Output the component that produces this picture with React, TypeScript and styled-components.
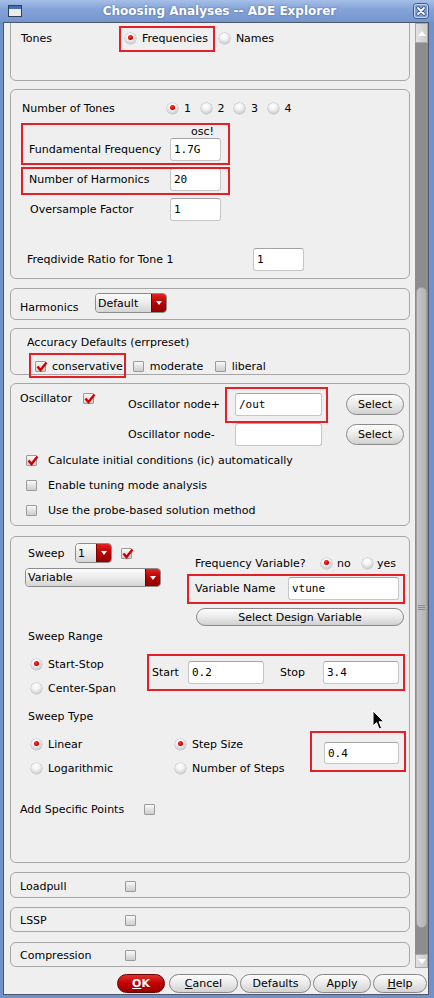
import React from "react";
import styled, { createGlobalStyle } from "styled-components";

const GlobalStyle = createGlobalStyle`
  * { box-sizing: border-box; }
  html, body { margin: 0; padding: 0; }
  body {
    background: #7090c8;
    font-family: "DejaVu Sans", "Liberation Sans", sans-serif;
    font-size: 11px;
    color: #000;
  }
`;

const Window = styled.div`
  position: relative;
  width: 434px;
  height: 998px;
  display: flex;
  flex-direction: column;
  background: #7191c9;
  overflow: hidden;
`;

const TitleBar = styled.header`
  flex: none;
  height: 22px;
  display: flex;
  align-items: center;
  padding: 0 5px 0 8px;
  background: linear-gradient(#a6bfe8 0%, #86a4d9 40%, #7595cd 100%);
`;

const TitleText = styled.div`
  flex: 1;
  text-align: center;
  padding-left: 4px;
  font-family: "DejaVu Sans", sans-serif;
  font-weight: bold;
  font-size: 12px;
  line-height: 22px;
  color: #fff;
  white-space: nowrap;
  text-shadow: 0 0 2px rgba(40, 60, 110, 0.6);
`;

const Frame = styled.div`
  flex: 1;
  min-height: 0;
  display: flex;
  flex-direction: column;
  margin: 0 5px 3px 3px;
  border: 1px solid #4b566c;
  background: #efefef;
`;

const Main = styled.div`
  flex: none;
  height: 945px;
  display: flex;
`;

const Viewport = styled.div`
  flex: 1;
  overflow: hidden;
  display: flex;
  flex-direction: column;
  padding: 0 5px 0 6px;
`;

const Scrollbar = styled.div`
  flex: none;
  width: 13px;
  display: flex;
  flex-direction: column;
  background: #8d8d8d;
`;

const ScrollArrow = styled.div<{ $h: number }>`
  flex: none;
  height: ${(p) => p.$h}px;
  display: flex;
  align-items: center;
  justify-content: center;
  background: linear-gradient(90deg, #e2e2e2, #cdcdcd);
  border: 1px solid #a9a9a9;
`;

const TriUp = styled.span`
  width: 0;
  height: 0;
  border-left: 4px solid transparent;
  border-right: 4px solid transparent;
  border-bottom: 5px solid #fff;
`;

const TriDown = styled.span`
  width: 0;
  height: 0;
  border-left: 4px solid transparent;
  border-right: 4px solid transparent;
  border-top: 5px solid #fff;
`;

const ScrollTrack = styled.div`
  flex: 1;
  padding: 244px 1px 0;
`;

const Thumb = styled.div`
  height: 641px;
  border-radius: 6px;
  border: 1px solid #a0a0a0;
  background: linear-gradient(90deg, #c6c6c6, #b3b3b3);
  display: flex;
  flex-direction: column;
  align-items: center;
  justify-content: center;
  gap: 1px;
`;

const Grip = styled.span`
  width: 7px;
  height: 1px;
  background: #8a8a8a;
`;

const ButtonBar = styled.footer`
  flex: none;
  height: 26px;
  display: flex;
  justify-content: flex-end;
  align-items: flex-start;
  gap: 2px;
  padding: 6px 1px 0 0;
`;

const DialogButton = styled.div<{ $w: number; $primary?: boolean; $mr?: number }>`
  flex: none;
  width: ${(p) => p.$w}px;
  height: 19px;
  margin-right: ${(p) => p.$mr ?? 0}px;
  border-radius: 10px;
  border: 1px solid ${(p) => (p.$primary ? "#6a0000" : "#878787")};
  background: ${(p) =>
    p.$primary
      ? "linear-gradient(#e43030, #c00000 50%, #980000)"
      : "linear-gradient(#fcfcfc, #ececec 45%, #d2d2d2)"};
  color: ${(p) => (p.$primary ? "#fff" : "#000")};
  font-weight: ${(p) => (p.$primary ? "bold" : "normal")};
  display: flex;
  align-items: center;
  justify-content: center;
  line-height: 13px;
  white-space: nowrap;
`;

const Mnemonic = styled.span`
  text-decoration: underline;
`;

const Group = styled.section<{ $h: number; $mt: number }>`
  flex: none;
  position: relative;
  display: flex;
  flex-direction: column;
  height: ${(p) => p.$h}px;
  margin-top: ${(p) => p.$mt}px;
  border: 1px solid #a7a7a7;
  border-radius: 6px;
`;

const Row = styled.div<{ $mt?: number; $pl?: number; $h?: number; $align?: string }>`
  flex: none;
  display: flex;
  align-items: ${(p) => p.$align ?? "center"};
  margin-top: ${(p) => p.$mt ?? 0}px;
  padding-left: ${(p) => p.$pl ?? 0}px;
  ${(p) => (p.$h ? `height: ${p.$h}px;` : "")}
`;

const FillRow = styled.div`
  flex: 1;
  display: flex;
  align-items: center;
  padding: 2px 0 0 9px;
`;

const Column = styled.div<{ $w?: number; $mt?: number; $ml?: number; $gap?: number; $pl?: number }>`
  flex: none;
  display: flex;
  flex-direction: column;
  ${(p) => (p.$w ? `width: ${p.$w}px;` : "")}
  margin-top: ${(p) => p.$mt ?? 0}px;
  margin-left: ${(p) => p.$ml ?? 0}px;
  padding-left: ${(p) => p.$pl ?? 0}px;
  gap: ${(p) => p.$gap ?? 0}px;
`;

const Label = styled.span<{ $w?: number; $lh?: number; $mt?: number; $ml?: number }>`
  flex: none;
  white-space: nowrap;
  line-height: ${(p) => p.$lh ?? 13}px;
  ${(p) => (p.$w ? `width: ${p.$w}px;` : "")}
  margin-top: ${(p) => p.$mt ?? 0}px;
  margin-left: ${(p) => p.$ml ?? 0}px;
`;

const Choice = styled.span<{ $w?: number; $gap?: number; $ml?: number; $h?: number }>`
  flex: none;
  display: flex;
  align-items: center;
  gap: ${(p) => p.$gap ?? 6}px;
  ${(p) => (p.$w ? `width: ${p.$w}px;` : "")}
  ${(p) => (p.$h ? `height: ${p.$h}px;` : "")}
  margin-left: ${(p) => p.$ml ?? 0}px;
`;

const Radio = styled.span<{ $on?: boolean }>`
  flex: none;
  position: relative;
  width: 11px;
  height: 11px;
  border-radius: 50%;
  background: radial-gradient(circle at 45% 30%, #ffffff 0%, #f3f3f3 35%, #d0d0d0 72%, #a9a9a9 100%);
  box-shadow: 0 0 0 0.5px #b4b4b4;
  &::after {
    content: "";
    display: ${(p) => (p.$on ? "block" : "none")};
    position: absolute;
    left: 3px;
    top: 2.5px;
    width: 5px;
    height: 5px;
    border-radius: 50%;
    background: radial-gradient(circle at 40% 35%, #ff4040 0%, #d30000 55%, #8c0000 100%);
  }
`;

const CheckBox = styled.span`
  flex: none;
  position: relative;
  width: 11px;
  height: 11px;
  border: 1px solid #9b9b9b;
  border-radius: 1px;
  background: linear-gradient(#fafafa, #e2e2e2 50%, #cdcdcd);
`;

const CheckMark = styled.svg`
  position: absolute;
  left: -1px;
  top: -2px;
  overflow: visible;
`;

const Field = styled.div<{ $w: number; $h?: number }>`
  flex: none;
  width: ${(p) => p.$w}px;
  height: ${(p) => p.$h ?? 23}px;
  display: flex;
  align-items: center;
  padding-left: 3px;
  background: #fff;
  border: 1px solid #c6c6c6;
  border-top-color: #a4a4a4;
  border-radius: 3px;
  font-family: "DejaVu Sans Mono", "Liberation Mono", monospace;
  font-size: 11px;
  white-space: nowrap;
`;

const FieldStack = styled.div`
  flex: none;
  display: flex;
  flex-direction: column;
  align-items: flex-end;
`;

const OscTag = styled.span`
  height: 13px;
  line-height: 13px;
  padding-right: 7px;
`;

const PillButton = styled.div<{ $w: number; $h: number; $ml?: number }>`
  flex: none;
  width: ${(p) => p.$w}px;
  height: ${(p) => p.$h}px;
  margin-left: ${(p) => p.$ml ?? 0}px;
  border-radius: 11px;
  border: 1px solid #8a8a8a;
  background: linear-gradient(#fcfcfc, #ededed 45%, #d0d0d0);
  display: flex;
  align-items: center;
  justify-content: center;
  line-height: 13px;
  white-space: nowrap;
`;

const ComboBox = styled.div<{ $w: number; $h: number }>`
  flex: none;
  display: flex;
  width: ${(p) => p.$w}px;
  height: ${(p) => p.$h}px;
  border: 1px solid #8c8c8c;
  border-radius: 4px;
  overflow: hidden;
`;

const ComboValue = styled.div`
  flex: 1;
  display: flex;
  align-items: center;
  padding-left: 2px;
  background: linear-gradient(#fcfcfc, #ebebeb 50%, #d4d4d4);
  white-space: nowrap;
`;

const ComboButton = styled.div`
  flex: none;
  width: 15px;
  display: flex;
  align-items: center;
  justify-content: center;
  border-left: 1px solid #760000;
  background: linear-gradient(#de2424, #b80000 50%, #8e0000);
`;

const ComboTri = styled.span`
  width: 0;
  height: 0;
  border-left: 3.5px solid transparent;
  border-right: 3.5px solid transparent;
  border-top: 4px solid #fff;
`;

const Marked = styled.div<{ $align?: string; $mt?: number }>`
  position: relative;
  flex: none;
  display: flex;
  align-items: ${(p) => p.$align ?? "center"};
  margin-top: ${(p) => p.$mt ?? 0}px;
`;

const RedFrame = styled.span<{ $t: number; $r: number; $b: number; $l: number }>`
  position: absolute;
  top: ${(p) => -p.$t}px;
  right: ${(p) => -p.$r}px;
  bottom: ${(p) => -p.$b}px;
  left: ${(p) => -p.$l}px;
  border: 2px solid #e61e25;
  pointer-events: none;
`;

const Cursor = styled.svg`
  position: absolute;
  left: 361px;
  top: 173px;
`;

function Check({ on }: { on?: boolean }) {
  return (
    <CheckBox>
      {on && (
        <CheckMark width="13" height="13" viewBox="0 0 13 13">
          <polyline points="2.5,6.5 5.5,10 11.5,2.5" fill="none" stroke="#d10000" strokeWidth="2.4" />
        </CheckMark>
      )}
    </CheckBox>
  );
}

function Combo({ w, h, text }: { w: number; h: number; text: string }) {
  return (
    <ComboBox $w={w} $h={h}>
      <ComboValue>{text}</ComboValue>
      <ComboButton>
        <ComboTri />
      </ComboButton>
    </ComboBox>
  );
}

function WindowIcon() {
  return (
    <svg width="14" height="12" viewBox="0 0 14 12">
      <rect x="0.5" y="0.5" width="13" height="11" fill="#ececec" stroke="#2f3f60" />
      <rect x="1" y="1" width="12" height="3" fill="#4a6db0" />
    </svg>
  );
}

function CloseIcon() {
  return (
    <svg width="16" height="16" viewBox="0 0 16 16">
      <rect x="0.5" y="0.5" width="15" height="15" rx="3" fill="#7e9dd3" stroke="#3c5890" />
      <rect x="1.5" y="1.5" width="13" height="13" rx="2" fill="none" stroke="#cad8ef" />
      <path d="M5 5 L11 11 M11 5 L5 11" stroke="#34507e" strokeWidth="3.4" strokeLinecap="round" />
      <path d="M5 5 L11 11 M11 5 L5 11" stroke="#ffffff" strokeWidth="1.8" strokeLinecap="round" />
    </svg>
  );
}

export default function App() {
  return (
    <>
      <GlobalStyle />
      <Window>
        <TitleBar>
          <WindowIcon />
          <TitleText>Choosing Analyses -- ADE Explorer</TitleText>
          <CloseIcon />
        </TitleBar>
        <Frame>
          <Main>
            <Viewport>
              {/* Tones */}
              <Group $h={76} $mt={-18}>
                <Row $mt={19} $pl={10} $h={26}>
                  <Label $w={104}>Tones</Label>
                  <Marked>
                    <Choice>
                      <Radio $on />
                      <Label>Frequencies</Label>
                    </Choice>
                    <RedFrame $t={6} $l={6} $r={7} $b={7} />
                  </Marked>
                  <Choice $ml={11}>
                    <Radio />
                    <Label>Names</Label>
                  </Choice>
                </Row>
              </Group>

              {/* Tone settings */}
              <Group $h={190} $mt={8}>
                <Row $mt={9} $pl={11} $h={18}>
                  <Label $w={145}>Number of Tones</Label>
                  {["1", "2", "3", "4"].map((n) => (
                    <Choice key={n} $w={33.5}>
                      <Radio $on={n === "1"} />
                      <Label>{n}</Label>
                    </Choice>
                  ))}
                </Row>
                <Row $mt={8} $pl={18}>
                  <Marked $align="flex-end">
                    <Label $w={141} $lh={23}>
                      Fundamental Frequency
                    </Label>
                    <FieldStack>
                      <OscTag>osc!</OscTag>
                      <Field $w={51}>1.7G</Field>
                    </FieldStack>
                    <RedFrame $t={2} $l={8} $r={9} $b={4} />
                  </Marked>
                </Row>
                <Row $mt={7} $pl={18}>
                  <Marked>
                    <Label $w={141} $lh={23}>
                      Number of Harmonics
                    </Label>
                    <Field $w={51}>20</Field>
                    <RedFrame $t={1} $l={8} $r={9} $b={4} />
                  </Marked>
                </Row>
                <Row $mt={7} $pl={19}>
                  <Label $w={140}>Oversample Factor</Label>
                  <Field $w={51}>1</Field>
                </Row>
                <Row $mt={27} $pl={16}>
                  <Label $w={226}>Freqdivide Ratio for Tone 1</Label>
                  <Field $w={51}>1</Field>
                </Row>
              </Group>

              {/* Harmonics */}
              <Group $h={32} $mt={9}>
                <Row $mt={4} $pl={9} $align="flex-start">
                  <Label $w={75} $mt={8}>
                    Harmonics
                  </Label>
                  <Combo w={72} h={20} text="Default" />
                </Row>
              </Group>

              {/* Accuracy */}
              <Group $h={47} $mt={8}>
                <Row $mt={7} $pl={16}>
                  <Label>Accuracy Defaults (errpreset)</Label>
                </Row>
                <Row $mt={11} $pl={24} $h={13}>
                  <Marked>
                    <Choice>
                      <Check on />
                      <Label>conservative</Label>
                    </Choice>
                    <RedFrame $t={7} $l={6} $r={3} $b={5} />
                  </Marked>
                  <Choice $ml={10} $w={82}>
                    <Check />
                    <Label>moderate</Label>
                  </Choice>
                  <Choice>
                    <Check />
                    <Label>liberal</Label>
                  </Choice>
                </Row>
              </Group>

              {/* Oscillator */}
              <Group $h={143} $mt={8}>
                <Row $pl={9} $align="flex-start">
                  <Column $w={108} $mt={8}>
                    <Choice $gap={0}>
                      <Label $w={63}>Oscillator</Label>
                      <Check on />
                    </Choice>
                  </Column>
                  <Column $mt={9} $gap={7}>
                    <Row>
                      <Label $w={107}>Oscillator node+</Label>
                      <Marked>
                        <Field $w={87}>/out</Field>
                        <RedFrame $t={6} $l={10} $r={6} $b={7} />
                      </Marked>
                      <PillButton $w={58} $h={21} $ml={24}>
                        Select
                      </PillButton>
                    </Row>
                    <Row>
                      <Label $w={107}>Oscillator node-</Label>
                      <Field $w={87} />
                      <PillButton $w={58} $h={21} $ml={24}>
                        Select
                      </PillButton>
                    </Row>
                  </Column>
                </Row>
                <Column $mt={8} $pl={15} $gap={12}>
                  <Choice $gap={11}>
                    <Check on />
                    <Label>Calculate initial conditions (ic) automatically</Label>
                  </Choice>
                  <Choice $gap={11}>
                    <Check />
                    <Label>Enable tuning mode analysis</Label>
                  </Choice>
                  <Choice $gap={11}>
                    <Check />
                    <Label>Use the probe-based solution method</Label>
                  </Choice>
                </Column>
              </Group>

              {/* Sweep */}
              <Group $h={327} $mt={10}>
                <Row $mt={6} $pl={14} $align="flex-start">
                  <Column $w={136}>
                    <Row $pl={3} $h={20}>
                      <Label $w={47}>Sweep</Label>
                      <Combo w={37} h={20} text="1" />
                      <Choice $ml={9}>
                        <Check on />
                      </Choice>
                    </Row>
                    <Row $mt={5}>
                      <Combo w={136} h={19} text="Variable" />
                    </Row>
                  </Column>
                  <Column $w={217} $ml={26} $mt={10}>
                    <Row $pl={8} $h={20}>
                      <Label $w={126}>Frequency Variable?</Label>
                      <Choice $w={41} $gap={5}>
                        <Radio $on />
                        <Label>no</Label>
                      </Choice>
                      <Choice $gap={4}>
                        <Radio />
                        <Label>yes</Label>
                      </Choice>
                    </Row>
                    <Row $mt={4} $pl={8}>
                      <Marked>
                        <Label $w={93} $lh={23}>
                          Variable Name
                        </Label>
                        <Field $w={111}>vtune</Field>
                        <RedFrame $t={3} $l={8} $r={6} $b={4} />
                      </Marked>
                    </Row>
                    <Row $mt={8} $pl={9}>
                      <PillButton $w={208} $h={18}>
                        Select Design Variable
                      </PillButton>
                    </Row>
                  </Column>
                </Row>

                <Row $mt={4} $pl={17}>
                  <Label>Sweep Range</Label>
                </Row>
                <Row $mt={11} $pl={20} $align="flex-start">
                  <Column $w={121} $gap={4}>
                    <Choice $h={20}>
                      <Radio $on />
                      <Label>Start-Stop</Label>
                    </Choice>
                    <Choice $h={20}>
                      <Radio />
                      <Label>Center-Span</Label>
                    </Choice>
                  </Column>
                  <Marked $mt={7}>
                    <Label $w={36}>Start</Label>
                    <Field $w={76}>0.2</Field>
                    <Label $w={43} $ml={16}>
                      Stop
                    </Label>
                    <Field $w={76}>3.4</Field>
                    <RedFrame $t={7} $l={5} $r={6} $b={7} />
                  </Marked>
                </Row>

                <Row $mt={12} $pl={17}>
                  <Label>Sweep Type</Label>
                </Row>
                <Row $mt={11} $pl={20} $align="flex-start">
                  <Column $w={144} $gap={4}>
                    <Choice $h={20}>
                      <Radio $on />
                      <Label>Linear</Label>
                    </Choice>
                    <Choice $h={20}>
                      <Radio />
                      <Label>Logarithmic</Label>
                    </Choice>
                  </Column>
                  <Column $w={149} $gap={4}>
                    <Choice $h={20}>
                      <Radio $on />
                      <Label>Step Size</Label>
                    </Choice>
                    <Choice $h={20}>
                      <Radio />
                      <Label>Number of Steps</Label>
                    </Choice>
                  </Column>
                  <Marked $mt={8}>
                    <Field $w={75} $h={22}>
                      0.4
                    </Field>
                    <RedFrame $t={11} $l={14} $r={7} $b={8} />
                  </Marked>
                </Row>

                <Row $mt={25} $pl={9}>
                  <Label $w={124}>Add Specific Points</Label>
                  <Check />
                </Row>

                <Cursor width="13" height="21" viewBox="0 0 13 21">
                  <path
                    d="M1 1 L1 16 L4.5 12.6 L7.2 19 L9.6 18 L7 11.8 L11.8 11.8 Z"
                    fill="#000"
                    stroke="#fff"
                    strokeWidth="1"
                    strokeLinejoin="round"
                  />
                </Cursor>
              </Group>

              {/* Loadpull */}
              <Group $h={26} $mt={9}>
                <FillRow>
                  <Label $w={105}>Loadpull</Label>
                  <Check />
                </FillRow>
              </Group>

              {/* LSSP */}
              <Group $h={25} $mt={9}>
                <FillRow>
                  <Label $w={105}>LSSP</Label>
                  <Check />
                </FillRow>
              </Group>

              {/* Compression */}
              <Group $h={25} $mt={10}>
                <FillRow>
                  <Label $w={105}>Compression</Label>
                  <Check />
                </FillRow>
              </Group>
            </Viewport>

            <Scrollbar>
              <ScrollArrow $h={20}>
                <TriUp />
              </ScrollArrow>
              <ScrollTrack>
                <Thumb>
                  <Grip />
                  <Grip />
                  <Grip />
                </Thumb>
              </ScrollTrack>
              <ScrollArrow $h={14}>
                <TriDown />
              </ScrollArrow>
            </Scrollbar>
          </Main>

          <ButtonBar>
            <DialogButton $w={48} $primary $mr={2}>
              <Mnemonic>O</Mnemonic>K
            </DialogButton>
            <DialogButton $w={69}>
              <Mnemonic>C</Mnemonic>ancel
            </DialogButton>
            <DialogButton $w={71}>Defaults</DialogButton>
            <DialogButton $w={58}>Apply</DialogButton>
            <DialogButton $w={54}>
              <Mnemonic>H</Mnemonic>elp
            </DialogButton>
          </ButtonBar>
        </Frame>
      </Window>
    </>
  );
}
